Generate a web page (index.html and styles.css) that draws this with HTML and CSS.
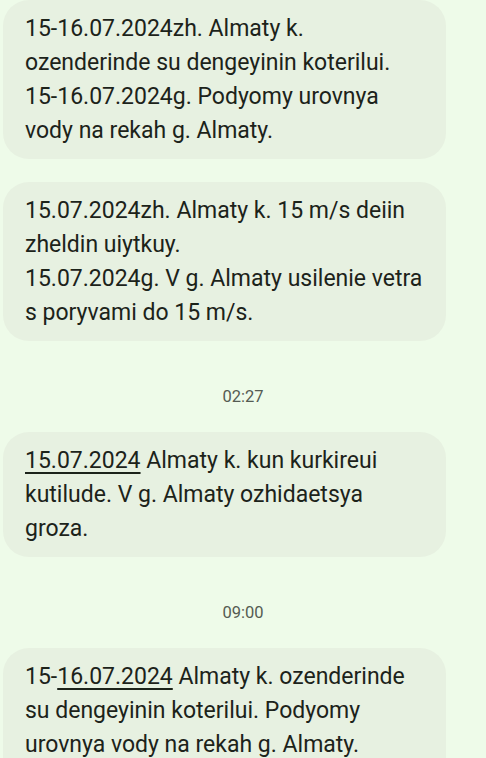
FILE: index.html
```html
<!DOCTYPE html>
<html lang="en">
<head>
<meta charset="utf-8">
<title>Messages</title>
<link rel="stylesheet" href="styles.css">
</head>
<body>
<main class="thread">
  <div class="bubble">15-16.07.2024zh. Almaty k.<br>ozenderinde su dengeyinin koterilui.<br>15-16.07.2024g. Podyomy urovnya<br>vody na rekah g. Almaty.</div>
  <div class="bubble">15.07.2024zh. Almaty k. 15 m/s deiin<br>zheldin uiytkuy.<br>15.07.2024g. V g. Almaty usilenie vetra<br>s poryvami do 15 m/s.</div>
  <div class="stamp">02:27</div>
  <div class="bubble"><span class="date">15.07.2024</span> Almaty k. kun kurkireui<br>kutilude. V g. Almaty ozhidaetsya<br>groza.</div>
  <div class="stamp">09:00</div>
  <div class="bubble">15-<span class="date">16.07.2024</span> Almaty k. ozenderinde<br>su dengeyinin koterilui. Podyomy<br>urovnya vody na rekah g. Almaty.<br>&nbsp;</div>
</main>
</body>
</html>
```
FILE: styles.css
```css
html, body {
  margin: 0;
  padding: 0;
  background: #eefbe9;
  height: 100%;
  overflow: hidden;
}

body {
  font-family: Roboto, "Noto Sans", sans-serif;
  color: #1c231a;
}

.thread {
  display: flex;
  flex-direction: column;
  gap: 23px;
  padding-left: 3px;
}

.bubble {
  width: 443px;
  box-sizing: border-box;
  background: #e7f1e1;
  border-radius: 26px;
  padding: 12px 10px 11px 22px;
  font-size: 23px;
  line-height: 34px;
  white-space: nowrap;
}

.date {
  text-decoration: underline;
  text-decoration-thickness: 2px;
  text-underline-offset: 4px;
}

.stamp {
  text-align: center;
  font-size: 16.5px;
  line-height: 20px;
  color: #555b53;
  margin: 23px 0 2px;
  padding-right: 3px;
}
```
